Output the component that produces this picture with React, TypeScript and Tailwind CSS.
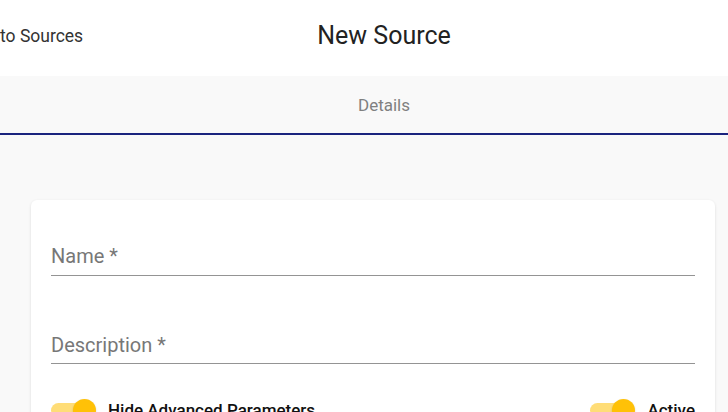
export default function App() {
  return (
    <div className="min-h-screen w-[728px] overflow-hidden bg-[#f9f9f9] font-['Roboto',sans-serif]">
      {/* Header */}
      <header className="relative flex h-[76px] items-center bg-white pb-1">
        <span className="absolute left-0 top-[24px] text-[17.5px] leading-6 text-[#333]">to Sources</span>
        <div className="flex flex-1 justify-center pl-10">
          <h1 className="text-[25px] font-normal leading-8 text-[#222]">New Source</h1>
        </div>
      </header>

      {/* Tabs */}
      <nav className="flex h-[59px] items-center border-b-2 border-[#1a237e] bg-[#f9f9f9] pl-10 pt-[3px]">
        <div className="flex flex-1 justify-center">
          <span className="text-[17px] text-[#808080]">Details</span>
        </div>
      </nav>

      {/* Form card */}
      <main className="pl-[31px] pr-[13px] pt-[65px]">
        <div className="rounded-[6px] bg-white px-5 pt-[44px] shadow-[0_1px_3px_rgba(0,0,0,0.12)]">
          <div className="border-b border-[#949494] pb-[7px]">
            <span className="block text-[20px] leading-6 text-[#777]">Name *</span>
          </div>
          <div className="mt-[57px] border-b border-[#949494] pb-[6px]">
            <span className="block text-[20px] leading-6 text-[#777]">Description *</span>
          </div>
          <div className="mt-[34px] flex items-center justify-between pb-6">
            <label className="flex items-center">
              <Toggle />
              <span className="ml-3 text-[17px] font-medium text-[#111]">Hide Advanced Parameters</span>
            </label>
            <label className="flex items-center">
              <Toggle />
              <span className="ml-3 text-[17px] font-medium text-[#111]">Active</span>
            </label>
          </div>
        </div>
      </main>
    </div>
  )
}

function Toggle() {
  return (
    <span className="relative flex h-[23px] w-[45px] items-center">
      <span className="h-[15px] w-[38px] rounded-full bg-[#ffdd77]"></span>
      <span className="absolute right-0 top-0 h-[23px] w-[23px] rounded-full bg-[#ffc107] shadow-[0_1px_2px_rgba(0,0,0,0.2)]"></span>
    </span>
  )
}
